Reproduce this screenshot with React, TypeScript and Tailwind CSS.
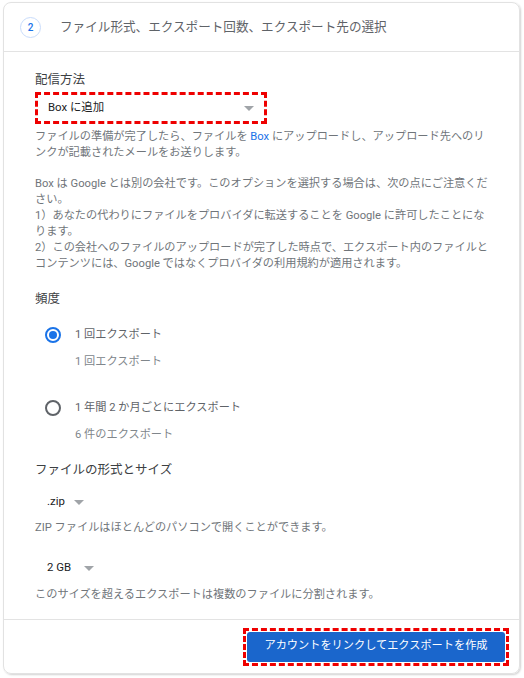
const font = "font-['Roboto','Noto_Sans_CJK_JP',sans-serif]";

function Caret({ className = "" }: { className?: string }) {
  return (
    <svg width="10" height="5" viewBox="0 0 10 5" className={className}>
      <path d="M0 0h10L5 5z" fill="#a0a4a8" />
    </svg>
  );
}

function Radio({ checked }: { checked?: boolean }) {
  return (
    <span
      className={`w-[16px] h-[16px] rounded-full border-2 flex items-center justify-center flex-shrink-0 ${
        checked ? "border-[#1a73e8]" : "border-[#5f6368]"
      }`}
    >
      {checked && <span className="w-[8px] h-[8px] rounded-full bg-[#1a73e8]" />}
    </span>
  );
}

function FrequencyOption({ label, sub, checked }: { label: string; sub: string; checked?: boolean }) {
  return (
    <div className="pl-[10px]">
      <div className="flex items-center gap-[14px] h-[20px]">
        <Radio checked={checked} />
        <span className="text-[11.2px] text-[#5f6368]">{label}</span>
      </div>
      <div className="pl-[30px] mt-[7px] text-[11.2px] leading-[20px] text-[#80868b]">{sub}</div>
    </div>
  );
}

export default function App() {
  return (
    <div className={`w-[524px] h-[678px] bg-white pt-[2px] pl-[3px] ${font}`}>
      <div className="w-[517px] h-[672px] rounded-[8px] border border-[#e2e2e2] shadow-[1px_1px_2px_rgba(0,0,0,0.18)] flex flex-col overflow-hidden">
        {/* Header */}
        <div className="h-[49px] flex items-center pl-[16px] border-b border-[#e3e3e3] flex-shrink-0">
          <span className="w-[21px] h-[21px] rounded-full border border-[#c9dcfb] flex items-center justify-center text-[10px] font-medium text-[#1a73e8]">
            2
          </span>
          <h2 className="ml-[19px] text-[12.6px] text-[#5f6368]">
            ファイル形式、エクスポート回数、エクスポート先の選択
          </h2>
        </div>

        {/* Body */}
        <div className="flex-1 px-[31px] pt-[20px]">
          <div className="text-[12.5px] leading-[16px] text-[#3c4043]">配信方法</div>
          <div className="mt-[4px] w-[232px] h-[32px] border-[3px] border-dashed border-[#ee0000] flex items-center justify-between pl-[10px] pr-[10px]">
            <span className="text-[11.4px] text-[#202124]">Box に追加</span>
            <Caret />
          </div>

          <div className="mt-[5px] w-[454px] text-[11.2px] leading-[16px] text-[#70757a]">
            <p>
              ファイルの準備が完了したら、ファイルを <span className="text-[#1a73e8]">Box</span>{" "}
              にアップロードし、アップロード先へのリンクが記載されたメールをお送りします。
            </p>
            <p className="mt-[15px]">
              Box は Google とは別の会社です。このオプションを選択する場合は、次の点にご注意ください。
            </p>
            <p>1）あなたの代わりにファイルをプロバイダに転送することを Google に許可したことになります。</p>
            <p>
              2）この会社へのファイルのアップロードが完了した時点で、エクスポート内のファイルとコンテンツには、Google
              ではなくプロバイダの利用規約が適用されます。
            </p>
          </div>

          <div className="mt-[19px] text-[12.5px] leading-[16px] text-[#3c4043]">頻度</div>
          <div className="mt-[18px] flex flex-col gap-[26px]">
            <FrequencyOption checked label="1 回エクスポート" sub="1 回エクスポート" />
            <FrequencyOption label="1 年間 2 か月ごとにエクスポート" sub="6 件のエクスポート" />
          </div>

          <div className="mt-[17px] text-[12.5px] leading-[16px] text-[#3c4043]">ファイルの形式とサイズ</div>
          <div className="mt-[15px] pl-[12px] flex items-center gap-[9px] h-[18px]">
            <span className="text-[11.4px] text-[#202124]">.zip</span>
            <Caret />
          </div>
          <div className="mt-[9px] text-[11.2px] leading-[16px] text-[#70757a]">
            ZIP ファイルはほとんどのパソコンで開くことができます。
          </div>
          <div className="mt-[23px] pl-[12px] flex items-center gap-[13px] h-[18px]">
            <span className="text-[11.4px] text-[#202124]">2 GB</span>
            <Caret />
          </div>
          <div className="mt-[10px] text-[11.2px] leading-[16px] text-[#70757a]">
            このサイズを超えるエクスポートは複数のファイルに分割されます。
          </div>
        </div>

        {/* Footer */}
        <div className="h-[54px] border-t border-[#e3e3e3] flex items-center justify-end pr-[10px] flex-shrink-0">
          <div className="border-[3px] border-dashed border-[#ee0000] p-px">
            <button className="w-[258px] h-[30px] rounded-[3px] bg-[#1a66cc] text-white text-[11.2px] flex items-center justify-center">
              アカウントをリンクしてエクスポートを作成
            </button>
          </div>
        </div>
      </div>
    </div>
  );
}
